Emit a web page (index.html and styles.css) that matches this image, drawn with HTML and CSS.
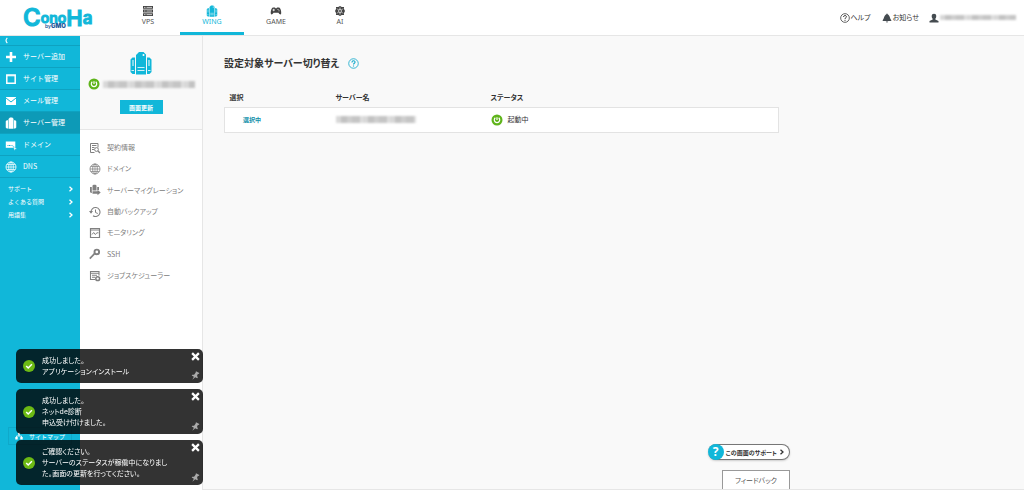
FILE: index.html
```html
<!DOCTYPE html>
<html lang="ja">
<head>
<meta charset="utf-8">
<title>ConoHa WING</title>
<link rel="stylesheet" href="styles.css">
</head>
<body>
<svg class="defs" aria-hidden="true">
  <symbol id="wing" viewBox="0 0 24 24">
    <path fill="currentColor" d="M7 4l3-3h4.500L17 3.500V23.500H7zM1.500 8.500l2-2H6v16.500H3.500l-2-2zM22.500 8.500l-2-2H18v16.500h2.500l2-2z"/>
    <path stroke="#fff" stroke-opacity=".8" stroke-width="1.2" d="M8.500 16.500h7M8.500 19.500h7M2.500 19.500h2.500M19 19.500h2.500M4 9v6M20 9v6"/>
    <circle cx="14.500" cy="4" r="1" fill="#fff"/>
  </symbol>
  <symbol id="power" viewBox="0 0 12 12">
    <circle cx="6" cy="6" r="5.500" fill="#5fb41b"/>
    <path d="M4.300 3.800a2.700 2.700 0 1 0 3.400 0M6 3.200v2.800" fill="none" stroke="#fff" stroke-width="1.200"/>
  </symbol>
  <symbol id="globe" viewBox="0 0 12 12">
    <g fill="none" stroke="currentColor" stroke-width=".8"><circle cx="6" cy="6" r="5"/><ellipse cx="6" cy="6" rx="2.300" ry="5"/><path d="M1 6h10M1.800 3.500h8.400M1.800 8.500h8.400M6 1v10" stroke-width=".7"/></g>
  </symbol>
  <symbol id="ask" viewBox="0 0 12 12">
    <g fill="none" stroke="currentColor"><circle cx="6" cy="6" r="5.200" stroke-width=".9"/><path d="M4.300 4.800C4.300 2.300 7.800 2.500 7.700 4.600 7.600 5.900 6 5.700 6 7.200M6 8.200v1.200" stroke-width="1.200"/></g>
  </symbol>
  <symbol id="check" viewBox="0 0 12 12">
    <circle cx="6" cy="6" r="6" fill="#6cb914"/><path d="M3.200 6l2 2 3.700-3.800" fill="none" stroke="#fff" stroke-width="1.500"/>
  </symbol>
  <symbol id="close" viewBox="0 0 8 8"><path d="M1 1l6 6M7 1L1 7" stroke="currentColor" stroke-width="2"/></symbol>
  <symbol id="pin" viewBox="0 0 10 10"><path d="M5.500.3l3.800 2-.6.900-1-.1-1 2.300.9 1.800-.7.800L4.700 7 1.500 9.800 3.200 6.300.8 5l.6-.9 2 .1 1.700-2.300z" fill="currentColor"/></symbol>
  <symbol id="arrow" viewBox="0 0 6 6"><path d="M1.500.7L4 3 1.500 5.300" fill="none" stroke="currentColor" stroke-width="1.300"/></symbol>
</svg>

<header class="header">
  <a class="logo" href="#"><span class="logo-c">C</span><span class="logo-ono">ono</span><span class="logo-h">H</span><span class="logo-a">a</span><small class="logo-by">by<b>GMO</b></small></a>
  <nav class="tabs">
    <a class="tab" href="#"><svg class="tab-icon" viewBox="0 0 12 12"><path fill="#444" d="M1 1h10v2.800H1zM1 4.600h10v2.800H1zM1 8.200h10V11H1z"/><path stroke="#fff" stroke-width=".7" d="M2 2.400h1.500M4.500 2.400h5.500M2 6h1.500M4.500 6h5.500M2 9.600h1.500M4.500 9.600h5.500"/></svg>VPS</a>
    <a class="tab tab-on" href="#"><svg class="tab-icon"><use href="#wing"/></svg>WING</a>
    <a class="tab" href="#"><svg class="tab-icon" viewBox="0 0 12 12"><path fill="#444" d="M3 2.500h2l.4.700h1.200l.4-.7h2c1.500.3 2.500 4 2.200 6-.4 1.500-1.600 1-2.700-.8h-5C2.400 9.500 1.200 10 .8 8.500.5 6.500 1.500 2.800 3 2.500z"/><path stroke="#fff" stroke-width=".8" d="M2.500 5h2.400M3.700 3.800v2.400M7.500 4.500h1M8.500 5.800h1"/></svg>GAME</a>
    <a class="tab" href="#"><svg class="tab-icon" viewBox="0 0 12 12"><path d="M6 1l1.800 1H10v2l1 2-1 2v2H7.800L6 11l-1.800-1H2V8L1 6l1-2V2h2.200z" fill="#444"/><g fill="none" stroke="#fff" stroke-width=".7"><circle cx="6" cy="6" r="1.500"/><path d="M3 3.500L4.500 5M9 3.500L7.500 5M3 8.500L4.500 7M9 8.500L7.500 7M6 2.500v2M6 7.500v2"/></g></svg>AI</a>
  </nav>
  <nav class="tools">
    <a class="tool" href="#"><svg class="i10"><use href="#ask"/></svg>ヘルプ</a>
    <a class="tool" href="#"><svg class="i10" viewBox="0 0 10 10"><path fill="#444b50" d="M4.300.8h1.400v.7C8 2.200 7.500 5 9.300 7.200V8H.7v-.8C2.500 5 2 2.200 4.300 1.500zM3.700 8.500h2.600L5 9.800z"/></svg>お知らせ</a>
    <a class="tool" href="#" aria-label="アカウント"><svg class="i10" viewBox="0 0 10 10"><path fill="#444b50" d="M5 .7c3 0 2.600 3.800 1.300 5v.8L9.500 8v1.500H.5V8l3.200-1.500v-.8C2.400 4.500 2 .7 5 .7z"/></svg><span class="masked masked-mail"></span></a>
  </nav>
</header>

<div class="body">
  <aside class="side">
    <button class="fold" aria-label="閉じる"><svg viewBox="0 0 6 8" class="fold-icon"><path d="M4.500 1Q1.500 4 4.500 7" fill="none" stroke="#fff" stroke-width="1.300"/></svg></button>
    <nav>
      <a class="item" href="#"><svg class="i12" viewBox="0 0 12 12"><path d="M6 1v10M1 6h10" stroke="#fff" stroke-width="2.600"/></svg>サーバー追加</a>
      <a class="item" href="#"><svg class="i12" viewBox="0 0 12 12"><path d="M1.800 2h8.400v8.200H1.800z" fill="none" stroke="#fff" stroke-width="1.500"/><path d="M1.500 2.800h9" stroke="#fff"/></svg>サイト管理</a>
      <a class="item" href="#"><svg class="i12" viewBox="0 0 12 12"><path d="M1 2h10v8H1z" fill="#fff"/><path d="M1 3l5 4 5-4" fill="none" stroke="#11b7d9"/></svg>メール管理</a>
      <a class="item item-on" href="#"><svg class="i12"><use href="#wing"/></svg>サーバー管理</a>
      <a class="item" href="#"><svg class="i12" viewBox="0 0 12 12"><path d="M.8 2.500h9.500v6.300H.8z" fill="#fff"/><path d="M2.500 6.500h5" stroke="#11b7d9" stroke-dasharray="1 .5"/><path d="M8 7l4 3-1.800.3-.7 1.500z" fill="#fff" stroke="#11b7d9" stroke-width=".4"/></svg>ドメイン</a>
      <a class="item" href="#"><svg class="i12"><use href="#globe"/></svg>DNS</a>
    </nav>
    <nav class="minor">
      <a href="#">サポート<svg class="i6"><use href="#arrow"/></svg></a>
      <a href="#">よくある質問<svg class="i6"><use href="#arrow"/></svg></a>
      <a href="#">用語集<svg class="i6"><use href="#arrow"/></svg></a>
    </nav>
    <a class="sitemap" href="#"><svg class="i8" viewBox="0 0 8 8"><path d="M3 .5h2v2H3zM.3 5h2.400v2.500H.3zM5.300 5h2.400v2.500H5.300z" fill="#fff"/><path d="M4 2v2M1.500 5V4h5v1" fill="none" stroke="#fff" stroke-width=".8"/></svg>サイトマップ</a>
  </aside>

  <aside class="sub">
    <div class="server">
      <svg class="server-icon"><use href="#wing"/></svg>
      <div class="server-name"><svg class="i12"><use href="#power"/></svg><span class="masked masked-server"></span></div>
      <button class="refresh">画面更新</button>
    </div>
    <nav class="subnav">
      <a href="#"><svg class="i12" viewBox="0 0 12 12"><g fill="none" stroke="currentColor"><path d="M5.500 10.500h-4v-9h7.500v4M3 3.500h4.500M3 5.500h2.500M3 7.500h2"/><circle cx="7.500" cy="7.500" r="1.900"/><path d="M9 9l2 2" stroke-width="1.300"/></g></svg>契約情報</a>
      <a href="#"><svg class="i12"><use href="#globe"/></svg>ドメイン</a>
      <a href="#"><svg class="i12" viewBox="0 0 12 12"><path fill="currentColor" d="M3.500 1.500L4.500.7h2l1 .8v5h-4zM1 3h1.800v6H2L1 8zM8.200 3H10v3H8.200zM3.500 7.300h5V5.800L11.700 8.500 8.500 11.300V9.700h-5z"/></svg>サーバーマイグレーション</a>
      <a href="#"><svg class="i12" viewBox="0 0 12 12"><g fill="none" stroke="currentColor"><path d="M2 6.500A4.500 4.500 0 1 1 4 9.800" stroke-width="1.100"/><path d="M6.500 3.500v3l2.300 1"/></g><path fill="currentColor" d="M0 5h4L2 7.800z"/></svg>自動バックアップ</a>
      <a href="#"><svg class="i12" viewBox="0 0 12 12"><g fill="none" stroke="currentColor"><path d="M1.500 1.500h9v9h-9zM1.500 3h9" stroke-width="1.200"/><path d="M3 7.500l1.700-2 1.500 2L8 5.800h1.500"/></g></svg>モニタリング</a>
      <a href="#"><svg class="i12" viewBox="0 0 12 12"><path d="M.8 10.700l4.700-5" stroke="currentColor" stroke-width="1.700"/><circle cx="7.800" cy="3.900" r="2.300" fill="none" stroke="currentColor" stroke-width="1.900"/></svg>SSH</a>
      <a href="#"><svg class="i12" viewBox="0 0 12 12"><path d="M6 9.500H1.500v-8h8.500v4M1.500 3.200H10M3 5.300h5M3 7.300h3" fill="none" stroke="currentColor" stroke-width="1.100"/><circle cx="8.700" cy="8.700" r="1.900" fill="none" stroke="currentColor" stroke-width="1.500"/></svg>ジョブスケジューラー</a>
    </nav>
  </aside>

  <main class="main">
    <div class="content">
      <h1 class="title">設定対象サーバー切り替え<svg class="i11"><use href="#ask"/></svg></h1>
      <table class="servers">
        <thead><tr><th class="c1">選択</th><th class="c2">サーバー名</th><th>ステータス</th></tr></thead>
        <tbody><tr><td class="chosen">選択中</td><td><span class="masked masked-row"></span></td><td><span class="state"><svg class="i12"><use href="#power"/></svg>起動中</span></td></tr></tbody>
      </table>
      <div class="help">
        <button class="support"><span class="support-q">?</span>この画面のサポート<svg class="i6"><use href="#arrow"/></svg></button>
        <button class="feedback">フィードバック</button>
      </div>
    </div>
  </main>
</div>

<div class="toasts">
  <section class="toast"><svg class="i12"><use href="#check"/></svg><p>成功しました。<br>アプリケーションインストール</p><div class="toast-side"><button aria-label="閉じる"><svg class="i9"><use href="#close"/></svg></button><button class="pin" aria-label="固定"><svg class="i9"><use href="#pin"/></svg></button></div></section>
  <section class="toast"><svg class="i12"><use href="#check"/></svg><p>成功しました。<br>ネットde診断<br>申込受け付けました。</p><div class="toast-side"><button aria-label="閉じる"><svg class="i9"><use href="#close"/></svg></button><button class="pin" aria-label="固定"><svg class="i9"><use href="#pin"/></svg></button></div></section>
  <section class="toast"><svg class="i12"><use href="#check"/></svg><p>ご確認ください。<br>サーバーのステータスが稼働中になりまし<br>た。画面の更新を行ってください。</p><div class="toast-side"><button aria-label="閉じる"><svg class="i9"><use href="#close"/></svg></button><button class="pin" aria-label="固定"><svg class="i9"><use href="#pin"/></svg></button></div></section>
</div>
</body>
</html>
```

FILE: styles.css
```css
* { box-sizing: border-box; }
body {
  margin: 0;
  min-height: 100vh;
  display: flex;
  flex-direction: column;
  background: #f9f9f9;
  color: #333;
  font: 7px/11px "Noto Sans CJK JP", sans-serif;
  font-feature-settings: "palt";
}
a { color: inherit; text-decoration: none; }
button { padding: 0; border: 0; background: none; color: inherit; font: inherit; font-feature-settings: inherit; cursor: pointer; }
svg { display: block; flex: none; }
.defs { position: absolute; width: 0; height: 0; }
.i6 { width: 6px; height: 6px; }
.i8 { width: 8px; height: 8px; }
.i9 { width: 9px; height: 9px; }
.i10 { width: 10px; height: 10px; }
.i11 { width: 11px; height: 11px; }
.i12 { width: 12px; height: 12px; }

.header {
  display: flex;
  height: 36px;
  background: #fff;
  border-bottom: 1px solid #e6e6e6;
}
.logo {
  position: relative;
  display: flex;
  align-items: center;
  width: 116px;
  padding-left: 23px;
  color: #11b7d9;
  font-family: Inter, sans-serif;
  font-weight: 600;
  line-height: 10px;
  -webkit-text-stroke: 1px #11b7d9;
}
.logo-c { font-size: 24px; }
.logo-h { font-size: 22px; }
.logo-ono { font-size: 14px; }
.logo-a { font-size: 17px; }
.logo-by {
  position: absolute;
  left: 45px;
  top: 23px;
  color: #1d5b9b;
  font-size: 5px;
  line-height: 6px;
  -webkit-text-stroke: 0;
}
.logo-by b { font-size: 6px; font-weight: 900; }
.tabs { display: flex; }
.tab {
  display: flex;
  flex-direction: column;
  align-items: center;
  width: 64px;
  height: 35px;
  padding-top: 5px;
  font-family: "Noto Sans", sans-serif;
  line-height: 10px;
  color: #555;
}
.tab-icon { width: 12px; height: 12px; }
.tab-on { color: #11b7d9; border-bottom: 3px solid #11b7d9; }
.tools {
  display: flex;
  align-items: center;
  gap: 10px;
  margin-left: auto;
  padding-right: 8px;
}
.tool { display: flex; align-items: center; gap: 1px; }
.tool:first-child { margin-right: 1px; }

.masked {
  display: block;
  height: 7px;
  filter: blur(1px);
  background: repeating-linear-gradient(90deg, #d8d8d8 0 5px, #c2c2c2 5px 11px, #cecece 11px 16px, #c5c5c5 16px 24px, #dedede 24px 27px);
}
.masked-mail { width: 76px; height: 5px; }
.masked-server { width: 92px; }
.masked-row { width: 80px; }

.body { display: flex; flex: 1; }
.side {
  display: flex;
  flex-direction: column;
  width: 80px;
  background: #11b7d9;
  color: #fff;
}
.fold { display: flex; align-items: center; height: 9px; padding-left: 3px; }
.fold-icon { width: 6px; height: 7px; }
.item {
  display: flex;
  align-items: center;
  gap: 6px;
  height: 22px;
  padding-left: 5px;
  border-top: 1px solid #0ea2c1;
  font-feature-settings: normal;
}
.item-on { background: #0d9ab7; }
.minor {
  display: flex;
  flex-direction: column;
  padding: 4px 6px 0 8px;
  border-top: 1px solid #0ea2c1;
  font-size: 6px;
  line-height: 13px;
  font-feature-settings: normal;
}
.minor a { display: flex; align-items: center; justify-content: space-between; }
.sitemap {
  display: flex;
  align-items: center;
  gap: 6px;
  height: 18px;
  margin: auto 8px 45px;
  padding-left: 6px;
  border: 1px solid #0fa9ca;
  font-size: 6px;
  font-feature-settings: normal;
}

.sub { width: 123px; background: #fff; border-right: 1px solid #e6e6e6; }
.server {
  display: flex;
  flex-direction: column;
  align-items: center;
  height: 94px;
  padding-top: 15px;
  background: #f9f9f9;
  border-bottom: 1px solid #e6e6e6;
}
.server-icon { width: 24px; height: 24px; color: #11b7d9; }
.server-name { display: flex; align-items: center; gap: 3px; margin-top: 3px; }
.refresh {
  width: 43px;
  height: 14px;
  margin-top: 10px;
  background: #11b7d9;
  color: #fff;
  font-size: 6px;
  font-weight: 700;
}
.subnav { padding: 7px 0 0 9px; color: #808080; }
.subnav a { display: flex; align-items: center; gap: 6px; height: 21px; }
.subnav a:nth-child(3n) { height: 22px; }

.main { display: flex; flex: 1; border-bottom: 1px solid #e6e6e6; }
.content {
  display: flex;
  flex-direction: column;
  width: 100%;
  max-width: 587px;
  padding: 19px 0 0 21px;
}
.title {
  display: flex;
  align-items: center;
  gap: 8px;
  margin: 0 0 18px;
  font-size: 10px;
  line-height: 16px;
}
.title svg { color: #11a9cb; }
.servers {
  width: calc(100% - 11px);
  border-collapse: collapse;
  table-layout: fixed;
  text-align: left;
}
.c1 { width: 106px; }
.c2 { width: 155px; }
.servers th { height: 18px; padding: 0 5px; }
.servers tbody tr { background: #fff; border: 1px solid #e3e3e3; }
.servers td { height: 25px; padding: 0 5px; }
.servers .chosen { padding-left: 18px; color: #118fa9; font-size: 6px; font-weight: 700; }
.state { display: flex; align-items: center; gap: 5px; }
.help {
  display: flex;
  flex-direction: column;
  align-items: flex-end;
  gap: 10px;
  margin-top: auto;
}
.support {
  display: flex;
  align-items: center;
  gap: 2px;
  height: 16px;
  padding-right: 4px;
  border: 1px solid #777;
  border-left: 0;
  border-radius: 8px;
  background: #fff;
  box-shadow: 0 1px 2px #ccc;
  font-size: 6px;
  font-weight: 700;
}
.support-q {
  width: 16px;
  height: 16px;
  border-radius: 50%;
  background: #11b7d9;
  color: #fff;
  font: 700 12px/16px "Noto Sans", sans-serif;
}
.feedback {
  width: 68px;
  height: 19px;
  border: 1px solid #999;
  border-bottom: 0;
  background: #fff;
  color: #555;
}

.toasts {
  position: fixed;
  left: 16px;
  bottom: 5px;
  display: flex;
  flex-direction: column;
  gap: 6px;
  width: 187px;
}
.toast {
  display: flex;
  align-items: center;
  gap: 7px;
  padding: 6px 3px 6px 7px;
  border-radius: 5px;
  background: rgba(0, 0, 0, .8);
  color: #fff;
}
.toast p { flex: 1; margin: 0; }
.toast-side { display: flex; flex-direction: column; justify-content: space-between; align-self: stretch; margin: -3px 0; }
.pin { color: #aaa; }
```
